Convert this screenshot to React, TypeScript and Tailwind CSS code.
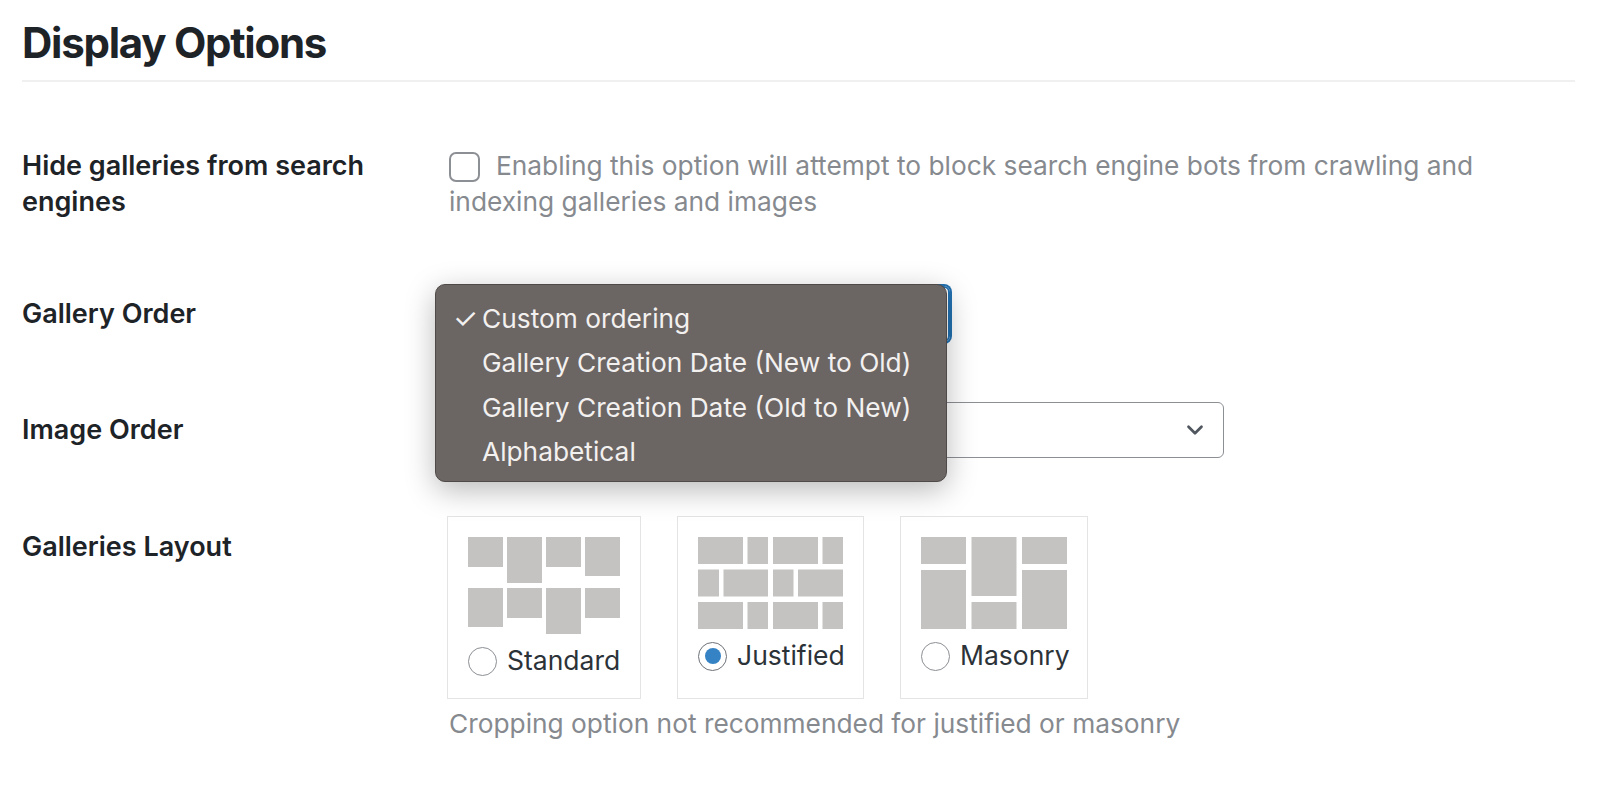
import { ChevronDown } from 'lucide-react';

const galleryOrders = [
  'Custom ordering',
  'Gallery Creation Date (New to Old)',
  'Gallery Creation Date (Old to New)',
  'Alphabetical',
];

const tile = '#c4c3c2';

const StandardArt = () => (
  <svg width="152" height="97" viewBox="0 0 152 97">
    <rect x="0" y="0" width="35" height="30" fill={tile} />
    <rect x="39" y="0" width="35" height="46" fill={tile} />
    <rect x="78" y="0" width="35" height="30" fill={tile} />
    <rect x="117" y="0" width="35" height="39" fill={tile} />
    <rect x="0" y="51" width="35" height="39" fill={tile} />
    <rect x="39" y="51" width="35" height="30" fill={tile} />
    <rect x="78" y="51" width="35" height="46" fill={tile} />
    <rect x="117" y="51" width="35" height="30" fill={tile} />
  </svg>
);

const JustifiedArt = () => (
  <svg width="145" height="92" viewBox="0 0 145 92">
    <rect x="0" y="0" width="45" height="27" fill={tile} />
    <rect x="49.5" y="0" width="20.5" height="27" fill={tile} />
    <rect x="75" y="0" width="45" height="27" fill={tile} />
    <rect x="124.5" y="0" width="20.5" height="27" fill={tile} />
    <rect x="0" y="32.5" width="21" height="27" fill={tile} />
    <rect x="25.5" y="32.5" width="44.5" height="27" fill={tile} />
    <rect x="75" y="32.5" width="20.5" height="27" fill={tile} />
    <rect x="100" y="32.5" width="45" height="27" fill={tile} />
    <rect x="0" y="65" width="45" height="27" fill={tile} />
    <rect x="49.5" y="65" width="20.5" height="27" fill={tile} />
    <rect x="75" y="65" width="45" height="27" fill={tile} />
    <rect x="124.5" y="65" width="20.5" height="27" fill={tile} />
  </svg>
);

const MasonryArt = () => (
  <svg width="146" height="92" viewBox="0 0 146 92">
    <rect x="0" y="0" width="45" height="27" fill={tile} />
    <rect x="0" y="33" width="45" height="59" fill={tile} />
    <rect x="50.5" y="0" width="45" height="59" fill={tile} />
    <rect x="50.5" y="65" width="45" height="27" fill={tile} />
    <rect x="101" y="0" width="45" height="27" fill={tile} />
    <rect x="101" y="33" width="45" height="59" fill={tile} />
  </svg>
);

const Radio = ({ checked }: { checked?: boolean }) => (
  <span
    className={`flex h-[29px] w-[29px] shrink-0 items-center justify-center rounded-full border-[1.5px] bg-white ${
      checked ? 'border-[#6d7278]' : 'border-[#8c8f94]'
    }`}
  >
    {checked && <span className="h-[16px] w-[16px] rounded-full bg-[#3582c4]" />}
  </span>
);

const layouts = [
  { label: 'Standard', width: 'w-[194px]', art: <StandardArt /> },
  { label: 'Justified', width: 'w-[187px]', art: <JustifiedArt />, checked: true },
  { label: 'Masonry', width: 'w-[188px]', art: <MasonryArt /> },
];

const Label = ({ children, pt }: { children: React.ReactNode; pt: string }) => (
  <div className={`w-[427px] shrink-0 ${pt}`}>
    <div className="w-[400px] text-[27px] leading-[36px] font-semibold text-[#1d2327]">{children}</div>
  </div>
);

export default function App() {
  return (
    <div className="h-[789px] w-[1600px] overflow-hidden bg-white pl-[22px] font-['Inter','Noto_Sans',sans-serif]">
      <div className="w-[1553px] border-b-2 border-[#f0f0f1] pt-[18px] pb-[12px]">
        <h2 className="text-[42px] leading-[50px] font-bold tracking-[-0.03em] text-[#1d2327]">Display Options</h2>
      </div>

      <div className="mt-[66px] flex">
        <Label pt="pt-0">Hide galleries from search engines</Label>
        <p className="w-[1080px] text-[26.3px] leading-[36px] text-[#868a8f]">
          <span className="mr-[16px] inline-block h-[30px] w-[31px] rounded-[7px] border-2 border-[#8c8f94] align-[-7px]" />
          Enabling this option will attempt to block search engine bots from crawling and indexing galleries and images
        </p>
      </div>

      <div className="mt-[66px] flex">
        <Label pt="pt-[10px]">Gallery Order</Label>
        <div className="relative">
          <div className="h-[56px] w-[501px] rounded-[6px] border-2 border-[#2271b1] shadow-[0_0_0_2px_#2271b1]" />
          <div className="absolute top-[-2px] left-[-14px] z-10 w-[512px] rounded-[10px] border border-[#4f4a48] bg-[#6b6563] pt-[11px] pb-[7px] text-[26.3px] text-[#f3f1f0] shadow-[0_8px_30px_rgba(0,0,0,0.28)]">
            {galleryOrders.map((o, i) => (
              <div key={o} className="flex h-[44.5px] items-center">
                <span className="w-[46px] pl-[17px] text-[28px] leading-none">{i === 0 ? '✓' : ''}</span>
                <span>{o}</span>
              </div>
            ))}
          </div>
        </div>
      </div>

      <div className="mt-[60px] flex">
        <Label pt="pt-[10px]">Image Order</Label>
        <div className="flex h-[56px] w-[775px] items-center justify-end rounded-[6px] border-[1.5px] border-[#8c8f94] pr-[15px]">
          <ChevronDown size={26} strokeWidth={2.5} className="text-[#50575e]" />
        </div>
      </div>

      <div className="mt-[58px] flex">
        <Label pt="pt-[13px]">Galleries Layout</Label>
        <div>
          <div className="-ml-[2px] flex gap-[36px]">
            {layouts.map((l) => (
              <div
                key={l.label}
                className={`${l.width} flex h-[183px] flex-col border border-[#e4e4e4] px-[20px] pt-[20px]`}
              >
                {l.art}
                <div className="mt-[9px] flex h-[36px] items-center gap-[10px] text-[26.5px] text-[#2c3338]">
                  <Radio checked={l.checked} />
                  <span>{l.label}</span>
                </div>
              </div>
            ))}
          </div>
          <p className="mt-[7px] text-[26.3px] leading-[36px] text-[#868a8f]">
            Cropping option not recommended for justified or masonry
          </p>
        </div>
      </div>
    </div>
  );
}
